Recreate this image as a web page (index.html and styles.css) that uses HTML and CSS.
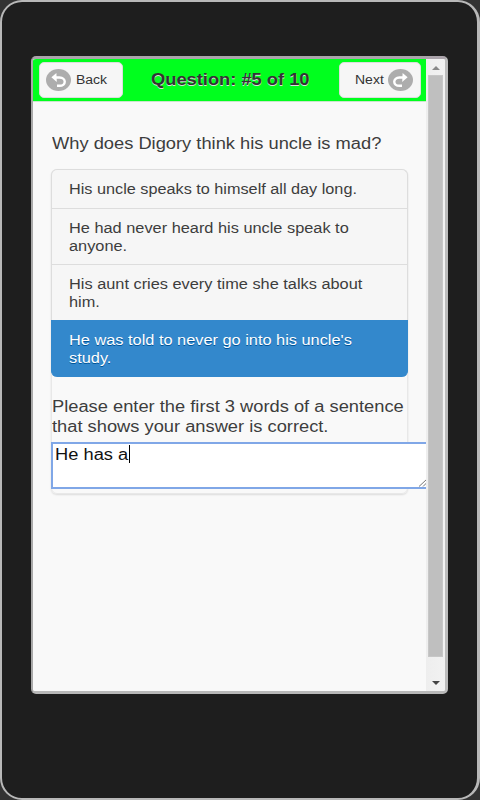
FILE: index.html
```html
<!DOCTYPE html>
<html lang="en">
<head>
<meta charset="utf-8">
<title>Quiz</title>
<link rel="stylesheet" href="styles.css">
</head>
<body>
<div class="device">
  <div class="screen">
    <main class="page">
      <header class="header">
        <div class="btn back">
          <svg class="icon" viewBox="0 0 25 22"><ellipse cx="12.5" cy="11" rx="12.5" ry="11"/><path class="arrow" d="M9 8.5H13.5C20.5 8.5 20.5 16.8 13.5 16.8H11"/><path class="tip" d="M5.4 8.2L10.4 4L10.8 13Z"/></svg>
          <span class="wide">Back</span>
        </div>
        <h1 class="wide">Question: #5 of 10</h1>
        <div class="btn next">
          <span class="wide">Next</span>
          <svg class="icon" viewBox="0 0 25 22"><ellipse cx="12.5" cy="11" rx="12.5" ry="11"/><path class="arrow" d="M16 8.5H11.5C4.5 8.5 4.5 16.8 11.5 16.8H14"/><path class="tip" d="M19.6 8.2L14.6 4L14.2 13Z"/></svg>
        </div>
      </header>
      <section class="content">
        <p class="question wide">Why does Digory think his uncle is mad?</p>
        <div class="group">
          <ul class="answers">
            <li class="first"><span class="wide">His uncle speaks to himself all day long.</span></li>
            <li><span class="wide">He had never heard his uncle speak to<br>anyone.</span></li>
            <li><span class="wide">His aunt cries every time she talks about<br>him.</span></li>
            <li class="active"><span class="wide">He was told to never go into his uncle's<br>study.</span></li>
          </ul>
          <p class="prompt wide">Please enter the first 3 words of a sentence<br>that shows your answer is correct.</p>
          <div class="entry">
            <span class="wide">He has a</span><i class="caret"></i>
            <svg class="grip" viewBox="0 0 9 8"><path d="M1 7.5L8.5 0.5M5 7.5L8.5 4"/></svg>
          </div>
        </div>
      </section>
    </main>
    <div class="scrollbar">
      <i class="up"></i>
      <div class="thumb"></div>
      <i class="down"></i>
    </div>
  </div>
</div>
</body>
</html>
```
FILE: styles.css
```css
* { box-sizing: border-box; }
body {
  margin: 0;
  width: 480px;
  height: 800px;
  overflow: hidden;
  background: #333;
  font-family: "Liberation Sans", Arial, sans-serif;
  color: #3d3d3d;
}
.device {
  height: 800px;
  padding: 54px 29px 0 29px;
  border: 2px solid #b8b8b8;
  border-right-width: 3px;
  border-radius: 22px;
  background: #1e1e1e;
}
.screen {
  display: flex;
  width: 417px;
  height: 638px;
  border: 2px solid #a9a9a9;
  border-top: 3px solid #aaa3aa;
  border-bottom: 3px solid #b8b8b8;
  border-right: 3px solid #bcbcbc;
  border-radius: 5px;
  background: #f1f1f1;
  overflow: hidden;
}
.page { width: 393px; background: #f9f9f9; overflow: hidden; flex: none; }
.wide {
  display: inline-block;
  white-space: nowrap;
  transform: scaleX(1.143);
  transform-origin: 0 0;
}
.header {
  display: flex;
  height: 43px;
  padding: 3px 5px 0 6px;
  background: #00ff1e;
  border-bottom: 1px solid #cbe5cd;
}
.btn {
  display: flex;
  align-items: center;
  height: 36px;
  border: 1px solid #ddd;
  border-radius: 5px;
  background: #f6f6f6;
  font-size: 12.5px;
  color: #333;
}
.btn .wide { transform: scaleX(1.12); }
.back { width: 84px; padding-left: 6px; gap: 5px; }
.next { width: 82px; margin-left: auto; padding-left: 15px; gap: 7px; }
.icon { width: 25px; height: 22px; flex: none; }
.icon ellipse { fill: #adadad; }
.icon .arrow { fill: none; stroke: #fff; stroke-width: 2.4; }
.icon .tip { fill: #fff; }
h1 {
  margin: 0 0 0 28px;
  font-size: 16px;
  line-height: 36px;
  color: #333;
  text-shadow: 0 1px 0 #ddd;
}
.content { padding: 32px 18px 0; }
.question, .prompt { margin: 0; font-size: 16px; }
.question { display: block; line-height: 20px; margin-left: 1px; }
.group {
  width: 357px;
  height: 325px;
  margin-top: 15px;
  border: 1px solid #e8e8e8;
  border-radius: 6px;
  box-shadow: 0 1px 2px rgba(0, 0, 0, .12);
}
.answers {
  margin: -1px;
  padding: 0;
  list-style: none;
  font-size: 14px;
  line-height: 17.6px;
}
.answers li {
  height: 56px;
  padding: 11px 0 0 17px;
  border: 1px solid #ddd;
  border-bottom: 0;
  background: #f6f6f6;
}
.answers .wide { transform: scaleX(1.167); }
.answers .first { height: 39px; border-radius: 6px 6px 0 0; }
.answers .first .wide { transform: scaleX(1.16); }
.answers .active {
  height: 57px;
  border-color: #3388cc;
  border-radius: 0 0 6px 6px;
  background: #3388cc;
  color: #fff;
  text-shadow: 0 1px 0 #005599;
}
.prompt { display: block; margin-top: 21px; line-height: 19.8px; }
.entry {
  position: relative;
  display: flex;
  align-items: flex-start;
  width: 400px;
  height: 47px;
  margin: 5px 0 0 -1px;
  padding: 1px 2px;
  border: 2px solid #80a7e7;
  background: #fff;
  color: #111;
  font-size: 16px;
  line-height: 19px;
}
.caret { width: 1px; height: 18px; margin-left: 10px; background: #000; }
.grip {
  position: absolute;
  left: 365px;
  bottom: 0;
  width: 9px;
  height: 8px;
  fill: none;
  stroke: #777;
}
.scrollbar {
  display: flex;
  flex-direction: column;
  align-items: center;
  width: 19px;
  padding: 7px 0;
  background: linear-gradient(90deg, #eee, #f2f2f2);
}
.up, .down { border: 4px solid transparent; height: 0; }
.up { border-top: 0; border-bottom-color: #888; }
.down { border-bottom: 0; border-top-color: #444; margin: auto 0 -1px; }
.thumb { width: 15px; height: 582px; margin-top: 5px; background: #bfbfbf; border: 1px solid #c7c7c7; }
```
